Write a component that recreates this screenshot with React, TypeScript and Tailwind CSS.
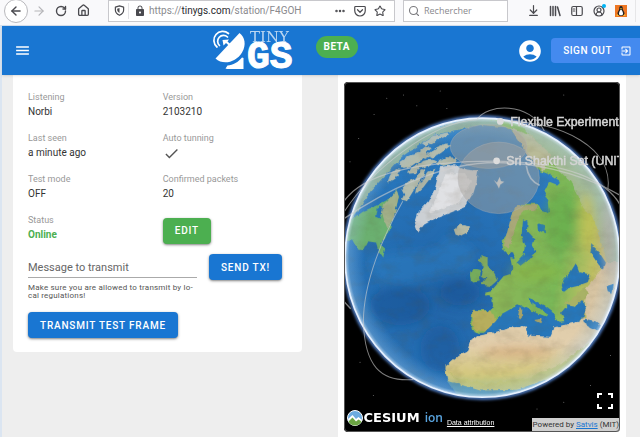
import type { ReactNode } from 'react'
import {
  MdAccountCircle,
  MdCheck,
  MdExitToApp,
  MdLock,
  MdMenu,
} from 'react-icons/md'
import {
  ArrowDownToLine,
  ArrowLeft,
  ArrowRight,
  CircleUserRound,
  Ellipsis,
  House,
  RotateCw,
  Search,
  Star,
} from 'lucide-react'

function ToolButton({ label, children }: { label: string; children: ReactNode }) {
  return (
    <button aria-label={label} className="relative flex size-[22px] items-center justify-center text-[#4a4a4f]">
      {children}
    </button>
  )
}

function ShieldIcon() {
  return (
    <svg viewBox="0 0 24 24" className="mx-px size-[11px]" fill="none" stroke="currentColor" strokeWidth="2.6" strokeLinejoin="round">
      <path d="M12 2 21 4.500V11c0 5-3.500 9-9 11.500C6.500 20 3 16 3 11V4.500z" />
      <path d="M12 6.500v11c-3-1.500-5-4-5-7V8z" fill="currentColor" stroke="none" />
    </svg>
  )
}

function PocketIcon() {
  return (
    <svg viewBox="0 0 24 24" className="size-3" fill="none" stroke="currentColor" strokeWidth="2.4" strokeLinecap="round" strokeLinejoin="round">
      <path d="M3 3h18a1.500 1.500 0 0 1 1.500 1.500v7a10.500 10.500 0 0 1-21 0v-7A1.500 1.500 0 0 1 3 3z" />
      <path d="m7 9.500 5 5 5-5" />
    </svg>
  )
}

function LibraryIcon() {
  return (
    <svg viewBox="0 0 24 24" className="size-3" fill="none" stroke="currentColor" strokeWidth="3" strokeLinecap="round">
      <path d="M3 3v18M8 3v18M13 3v18M17 4l5 17" />
    </svg>
  )
}

function SidebarIcon() {
  return (
    <svg viewBox="0 0 24 24" className="size-3" fill="none" stroke="currentColor" strokeWidth="2.4" strokeLinecap="round">
      <rect x="1.500" y="3" width="21" height="18" rx="3" />
      <path d="M11 3v18M4.500 8h3M4.500 12h3" />
    </svg>
  )
}

function PenguinIcon() {
  return (
    <svg viewBox="0 0 24 24" className="size-3">
      <rect width="24" height="24" fill="#ee7623" />
      <path d="M12 2c-3 0-3.600 2.500-3.500 6-.2 3-3.500 5-3.500 9 0 3 3 5 7 5s7-2 7-5c0-4-3.300-6-3.500-9 .1-3.500-.5-6-3.500-6z" fill="#222" />
      <path d="M12 9c-2 2-4 5-4 8s2 3.500 4 3.500 4-.5 4-3.500-2-6-4-8z" fill="#fff" />
      <path d="m10 7 2-1 2 1-2 2z" fill="#fbc02d" />
      <path d="M4 18l4 4H3zM20 18l-4 4h5z" fill="#fbc02d" />
    </svg>
  )
}

function BrowserBar() {
  return (
    <div className="flex h-[26px] items-center border-b border-[#d5e0ee] bg-[#f9f9fb] pb-1 pl-1">
      <div className="flex items-center">
        <button aria-label="Back" className="flex size-6 items-center justify-center rounded-full border border-[#b8b8bc] bg-white text-[#4a4a4f]">
          <ArrowLeft size={14} strokeWidth={2.4} />
        </button>
        <div className="flex">
          <ToolButton label="Forward">
            <ArrowRight size={14} strokeWidth={2} className="text-[#b5b5b8]" />
          </ToolButton>
          <ToolButton label="Reload">
            <RotateCw size={12} strokeWidth={2.8} />
          </ToolButton>
          <ToolButton label="Home">
            <House size={13} strokeWidth={2.4} />
          </ToolButton>
        </div>
      </div>

      <div className="ml-[14px] flex h-[22px] flex-1 items-center border border-[#c8c8cc] bg-white px-1 text-[#4a4a4f]">
        <ShieldIcon />
        <span className="mx-[2px] h-4 w-px bg-[#e3e3e6]" />
        <MdLock size={12} className="mx-[3px]" />
        <div
          role="textbox"
          aria-label="Address"
          tabIndex={0}
          className="flex-1 truncate font-[Roboto,'Open_Sans',sans-serif] text-[10px] text-[#8a8a8e]"
        >
          https://<span className="text-[#2a2a2e]">tinygs.com</span>/station/F4GOH
        </div>
        <button aria-label="Page actions" className="px-1">
          <Ellipsis size={12} strokeWidth={3} />
        </button>
        <button aria-label="Save to Pocket" className="px-1">
          <PocketIcon />
        </button>
        <button aria-label="Bookmark this page" className="px-1">
          <Star size={12} strokeWidth={2.2} />
        </button>
      </div>

      <label className="ml-2 flex h-[22px] w-[105px] items-center gap-1 border border-[#c8c8cc] bg-white px-1 text-[#7a7a7e]">
        <Search size={12} strokeWidth={2.2} className="shrink-0" />
        <input
          type="text"
          aria-label="Rechercher"
          placeholder="Rechercher"
          className="w-full min-w-0 font-['Open_Sans','Noto_Sans',sans-serif] text-[9px] outline-none placeholder:text-[#8a8a8e]"
        />
      </label>

      <div className="ml-[14px] flex border-r border-[#e6e6e8] pr-[3px]">
        <ToolButton label="Downloads">
          <ArrowDownToLine size={13} strokeWidth={2.2} />
        </ToolButton>
        <ToolButton label="Library">
          <LibraryIcon />
        </ToolButton>
        <ToolButton label="Sidebars">
          <SidebarIcon />
        </ToolButton>
        <ToolButton label="Account">
          <CircleUserRound size={12} strokeWidth={2.4} />
          <span className="absolute top-1 right-1 size-1 rounded-full bg-[#00b3f4]" />
        </ToolButton>
        <ToolButton label="Extension">
          <PenguinIcon />
        </ToolButton>
      </div>
      <div className="w-1" />
    </div>
  )
}

function Logo() {
  return (
    <svg viewBox="0 0 82 42" className="h-[42px] w-[82px] overflow-visible" fill="#fff" role="img" aria-label="Tiny GS">
      {/* dish, foot and feed */}
      <path d="M25.500 3C31 7 32.500 15 28 22.500 22 32.500 9 35.500 1.500 28.500z" />
      <path d="M11.500 38.500 13.500 35.500C19 35 24.500 32 28 27.500L29.500 28V39H13z" />
      <path d="M8.500 10 15 9.500 13.500 11.500 18 15.500 16.500 17 12 13 9.500 15.500z" />
      <g fill="none" stroke="#fff" strokeWidth="1.700" strokeLinecap="round">
        <path d="M5.500 15.500a5.500 5.500 0 0 1 8-8.500" />
        <path d="M3 17A8.500 8.500 0 0 1 14.500 3.500" />
      </g>
      <text x="36" y="12" fontFamily="'DejaVu Serif', serif" fontSize="15" opacity=".7">
        TINY
      </text>
      <text x="33" y="38" fontFamily="'Liberation Mono', monospace" fontSize="38" fontWeight="700" stroke="#fff" strokeWidth="1">
        GS
      </text>
    </svg>
  )
}

function AppHeader() {
  return (
    <header className="relative z-10 grid h-[49px] grid-cols-[3fr_auto_4fr] items-center bg-[#1976d2] text-white shadow">
      <button aria-label="Menu" className="ml-3 justify-self-start">
        <MdMenu size={17} />
      </button>
      <div className="flex items-center gap-5">
        <Logo />
        <span className="mb-2 rounded-full bg-[#4caf50] px-2 py-1 text-[10px] leading-[14px] font-bold tracking-wider">
          BETA
        </span>
      </div>
      <div className="flex items-center justify-end gap-2">
        <button aria-label="Account">
          <MdAccountCircle size={26} />
        </button>
        <button className="flex h-[25px] items-center gap-2 rounded-l bg-[#448aef] pr-2 pl-3 text-[10px] font-medium tracking-wider">
          SIGN OUT
          <MdExitToApp size={12} />
        </button>
      </div>
    </header>
  )
}

function Field({ label, children }: { label: string; children: ReactNode }) {
  return (
    <div className="h-[41px]">
      <dt className="text-[9px] leading-[14px] text-[#999]">{label}</dt>
      <dd className="text-[10px] leading-4 text-[#333]">{children}</dd>
    </div>
  )
}

const raised = 'h-[26px] shrink-0 rounded px-3 text-[10px] font-medium tracking-[0.08em] text-white shadow-sm shadow-black/40'

function StationCard() {
  return (
    <section className="self-start rounded-b bg-white pt-[15px] pr-1 pb-[14px] pl-[15px]">
      <dl className="grid grid-cols-2">
        <Field label="Listening">Norbi</Field>
        <Field label="Version">2103210</Field>
        <Field label="Last seen">a minute ago</Field>
        <Field label="Auto tunning">
          <MdCheck size={17} className="text-[#555]" aria-label="yes" />
        </Field>
        <Field label="Test mode">OFF</Field>
        <Field label="Confirmed packets">20</Field>
        <Field label="Status">
          <span className="font-bold text-[#4caf50]">Online</span>
        </Field>
        <div className="pt-1">
          <button className={`${raised} bg-[#4caf50]`}>EDIT</button>
        </div>
      </dl>

      <form className="flex gap-3">
        <div className="w-[169px]">
          <input
            type="text"
            aria-label="Message to transmit"
            placeholder="Message to transmit"
            className="block h-6 w-full border-b border-[#aaa] pt-1 text-[11px] outline-none placeholder:text-[#666]"
          />
          <p className="pt-[6px] text-[8px] leading-2 tracking-wide text-[#555]">
            Make sure you are allowed to transmit by lo&shy;cal regulations!
          </p>
        </div>
        <button type="button" className={`${raised} bg-[#1976d2]`}>
          SEND TX!
        </button>
      </form>
      <button className={`${raised} mt-3 bg-[#1976d2]`}>TRANSMIT TEST FRAME</button>
    </section>
  )
}

const arcticIslands = [
  'M205 262l28-18 30-12 22-18 20 4-18 18 10 8-32 14-20 14-30 8z',
  'M240 280l36-22 26-6 18 8-22 12-30 8-14 14-20 2z',
  'M214 342l18-22 22-10 14-22 20-8-4 20-18 22-12 18-24 38-16-4 8-16z',
  'M290 238l30-22 30-12 10 8-26 20-24 16z',
  'M316 262l30-16 34 2-8 16-32 8z',
  'M262 330l20-18 12-22 22-10-12 24-24 32-22 20z',
  'M272 206l40-24 40-10 4 8-36 16-30 16z',
  'M180 300l18-18 14 2-14 22-28 20z',
]

const stars = [
  [132, 118], [86, 190], [170, 70], [260, 92], [330, 48], [700, 60], [780, 130], [90, 860],
  [840, 840], [780, 930], [700, 980], [220, 60], [60, 260], [130, 960], [620, 1000], [350, 100],
]

// Units are thirds of a pixel at the map's usual size.
function Globe() {
  return (
    <svg viewBox="42 21 828 1047" className="block w-full bg-black" role="img" aria-label="Satellite map">
      <defs>
        <radialGradient id="ocean" cx=".35" cy=".62" r=".7">
          <stop offset="0" stopColor="#2163a6" />
          <stop offset=".5" stopColor="#2672b8" />
          <stop offset="1" stopColor="#2f84c8" />
        </radialGradient>
        <radialGradient id="air">
          <stop offset=".86" stopColor="#9cc4e4" stopOpacity="0" />
          <stop offset=".97" stopColor="#a9cdea" stopOpacity=".3" />
          <stop offset="1" stopColor="#eaf5ff" stopOpacity=".8" />
        </radialGradient>
        <linearGradient id="europe" gradientUnits="userSpaceOnUse" x1="540" y1="500" x2="880" y2="560">
          <stop offset="0" stopColor="#8ab758" />
          <stop offset=".45" stopColor="#7ab858" />
          <stop offset=".75" stopColor="#c0c065" />
          <stop offset="1" stopColor="#c8bda2" />
        </linearGradient>
        <linearGradient id="africa" x1="0" y1="0" x2="0" y2="1">
          <stop offset="0" stopColor="#d5c2a0" />
          <stop offset=".6" stopColor="#e3d0ae" />
          <stop offset=".8" stopColor="#d4c880" />
          <stop offset="1" stopColor="#98bd76" />
        </linearGradient>
        <filter id="soft" x="-40%" y="-40%" width="180%" height="180%">
          <feGaussianBlur stdDeviation="14" />
        </filter>
        <filter id="glow">
          <feGaussianBlur stdDeviation="4" />
        </filter>
        <filter id="coast" colorInterpolationFilters="sRGB">
          <feTurbulence type="fractalNoise" baseFrequency=".06" numOctaves="2" seed="4" />
          <feDisplacementMap in="SourceGraphic" scale="13" xChannelSelector="R" yChannelSelector="G" />
        </filter>
        <filter id="relief" x="0" y="0" width="100%" height="100%" colorInterpolationFilters="sRGB">
          <feTurbulence type="fractalNoise" baseFrequency=".02 .03" numOctaves="4" seed="8" />
          <feColorMatrix values="0 0 0 0 .35  0 0 0 0 .3  0 0 0 0 .2  2.500 0 0 0 -1.100" />
        </filter>
        <clipPath id="disc">
          <ellipse cx="456" cy="547" rx="411" ry="418" />
        </clipPath>
      </defs>

      <g fill="#777">
        {stars.map(([x, y]) => (
          <circle key={`${x}-${y}`} cx={x} cy={y} r="1.5" />
        ))}
      </g>

      <ellipse cx="456" cy="547" rx="414" ry="421" fill="none" stroke="#5b8fe0" strokeWidth="9" filter="url(#glow)" />
      <g clipPath="url(#disc)">
        <rect x="42" y="120" width="828" height="850" fill="url(#ocean)" />

        <g filter="url(#soft)">
          <ellipse cx="210" cy="690" rx="90" ry="60" fill="#124f91" opacity=".5" />
          <ellipse cx="390" cy="650" rx="60" ry="40" fill="#164f92" opacity=".5" />
          <ellipse cx="330" cy="820" rx="60" ry="70" fill="#144f90" opacity=".4" />
          <path d="M110 560C200 500 330 560 350 480 420 500 480 540 400 590 300 600 260 640 150 620z" fill="#2f84c8" opacity=".4" />
        </g>

        <g filter="url(#coast)">
          {/* North America and the arctic rim */}
          <path d="M30 500 60 400 130 290 200 215 300 160 430 128 540 128 560 160 450 150 380 165 320 178 270 205 215 245 175 290 120 350 100 385 60 440z" fill="#8fb095" />
          <path d="M40 450 95 410 140 390 175 372 200 345 206 365 195 410 184 445 178 470 165 485 150 505 165 520 160 550 146 530 138 502 112 498 100 522 80 518 66 492 40 495z" fill="#6bb070" />
          <path d="M150 400 200 345 206 365 190 430 172 460z" fill="#a3b18b" />
          {arcticIslands.map((d) => (
            <path key={d} d={d} fill="#b3bcae" />
          ))}

          {/* Greenland, Iceland, Svalbard */}
          <path d="M330 276 368 270 400 282 444 288 438 326 430 352 402 396 356 414 316 430 282 448 264 472 254 446 266 408 296 376 314 340z" fill="#ccd0d4" />
          <path d="M346 296 404 294 422 320 386 382 320 406 296 412 326 350z" fill="#e0e1e4" />
          <path d="M370 460 390 448 416 453 412 474 392 484 376 478z" fill="#b8bca6" />

          {/* Eurasia */}
          <path d="M470 128 540 165 575 185 592 220 602 250 622 285 662 300 692 320 680 332 656 322 642 350 652 380 656 412 632 404 624 386 570 386 546 410 544 440 530 480 514 500 520 526 534 540 548 530 556 552 540 548 546 578 540 596 520 602 500 626 482 648 464 652 470 662 486 666 488 690 484 705 425 703 420 735 425 766 448 772 470 772 497 738 560 690 690 740 770 730 800 800 900 780 900 128z" fill="url(#europe)" />
          <path d="M470 128 570 150 620 200 660 260 720 320 760 400 790 430 830 560 900 600 900 128z" fill="#a3ba92" />
          <path d="M540 160 600 180 660 240 640 290 600 250z" fill="#b9bb98" />
          <path d="M546 410 566 390 622 388 618 402 575 410 560 440 548 480 536 520 520 512z" fill="#a9a878" />
          <path d="M422 706 484 706 497 738 470 768 430 764z" fill="#b7ae5d" />

          {/* Africa and Arabia */}
          <path d="M448 780 500 768 545 754 586 752 592 780 660 784 668 756 730 742 765 728 764 640 830 560 900 560 880 800 760 900 640 950 500 975 400 955 350 912 345 874 386 838 411 826 421 794z" fill="url(#africa)" />
          <path d="M700 686 764 636 772 652 762 678 730 694z" fill="#a9b266" />
          <path d="M350 885 380 908 470 925 600 905 700 860 800 780 830 780 720 900 560 960 420 950z" fill="#c3c473" />
          <path d="M350 915 450 945 560 943 680 900 740 870 640 970 480 990 380 960z" fill="#4c93b2" />

          {/* British Isles */}
          <path d="M453 540 472 546 472 570 492 596 502 614 482 632 452 628 468 610 454 600 460 576 446 556z" fill="#83ac5f" />
          <path d="M430 578 452 584 448 616 422 620 420 600z" fill="#75ab5c" />

          {/* seas */}
          <g fill="#2777ba">
            <path d="M455 778 497 737 515 715 550 696 576 690 606 706 628 722 620 742 640 738 650 716 632 702 602 682 590 666 606 672 640 690 666 710 682 740 702 738 692 712 710 690 736 694 760 672 766 700 758 728 730 740 668 756 660 782 620 778 592 778 586 752 545 756z" />
            <path d="M700 612 720 590 736 564 746 590 780 598 772 620 740 632 715 638 700 650 694 630z" />
            <path d="M782 506 804 528 826 562 820 586 800 562 780 532z" />
            <path d="M764 730 790 736 812 754 806 766 780 756 758 740z" />
            <path d="M828 632 850 625 846 652 832 648z" />
            <path d="M578 432 592 440 590 466 612 490 606 510 616 530 598 552 572 572 558 560 580 536 584 508 574 480z" />
            <path d="M624 444 642 450 644 474 626 466z" />
            <path d="M144 394 158 400 152 430 138 424z" />
          </g>
          <path d="M568 694 576 702 574 732 562 728zM608 734 634 730 630 744z" fill="#a5a36b" />
        </g>

        {/* Svalbard */}
        <path d="M490 314 500 322 508 305 512 318 522 320 510 328 506 340 500 328z" fill="#d4dadf" />

        {/* terrain tints */}
        <g filter="url(#soft)">
          <ellipse cx="690" cy="440" rx="50" ry="90" fill="#5aa948" opacity=".45" />
          <ellipse cx="620" cy="590" rx="80" ry="30" fill="#8cb83f" opacity=".5" />
          <ellipse cx="770" cy="440" rx="22" ry="90" fill="#d5c64e" opacity=".5" />
          <ellipse cx="838" cy="480" rx="24" ry="120" fill="#b8a89a" opacity=".7" />
          <ellipse cx="560" cy="830" rx="110" ry="18" fill="#cf9d6c" opacity=".5" />
        </g>
        <rect x="42" y="120" width="828" height="850" filter="url(#relief)" opacity=".12" />
        <ellipse cx="456" cy="547" rx="411" ry="418" fill="url(#air)" />
      </g>
      <ellipse cx="456" cy="547" rx="411" ry="418" fill="none" stroke="#e6f1ff" strokeWidth="5" />

      {/* coverage areas */}
      <g fill="#a8a49c" fillOpacity=".48" stroke="#b5b5b8" strokeOpacity=".5" strokeWidth="2">
        <ellipse cx="475" cy="214" rx="115" ry="66" />
        <ellipse cx="505" cy="308" rx="122" ry="107" />
      </g>

      {/* orbits */}
      <g fill="none" stroke="#d0d0d0" strokeWidth="4" opacity=".6">
        <path d="M42 378C90 310 220 258 500 258 700 262 830 310 872 395" />
        <path d="M42 430C160 350 330 262 500 262 660 262 800 320 872 362" />
        <path d="M42 410C120 290 300 140 440 134 470 85 600 80 642 168" strokeWidth="3" />
        <path d="M510 138C700 138 850 220 832 345" strokeWidth="3" />
        <path d="M218 378C160 480 100 620 100 740 104 870 150 920 250 912" strokeWidth="3" />
        <path d="M42 678 62 700" />
        <path d="M588 272C592 300 604 320 628 330" strokeWidth="5" />
      </g>

      <g fill="#dcdcdc">
        <circle cx="510" cy="139" r="10" />
        <circle cx="499" cy="257" r="10" />
      </g>
      <g fontFamily="'Liberation Sans', Arial, sans-serif" fontSize="37" fill="#d4d4d4" stroke="#d4d4d4" strokeWidth="1.5">
        <text x="540" y="152">Flexible Experiment</text>
        <text x="528" y="270">Sri Shakthi Sat (UNIT</text>
      </g>
    </svg>
  )
}

function CesiumMark() {
  return (
    <svg viewBox="0 0 32 32" className="size-4">
      <circle cx="16" cy="16" r="15" fill="#6cabdf" stroke="#fff" strokeWidth="2" />
      <path d="M2 18 11 10 18 18 23 14 30 20A14.500 14.500 0 0 1 3 22z" fill="#fff" />
      <path d="M3 23 11 15 18 23 23 19 29 23A14.500 14.500 0 0 1 3 23z" fill="#6ba543" />
    </svg>
  )
}

function MapCard() {
  return (
    <section className="bg-white px-[6px] py-[7px]">
      <div className="relative overflow-hidden rounded-sm">
        <Globe />
        <button aria-label="Fullscreen" className="absolute right-[6px] bottom-[22px] text-white">
          <svg viewBox="0 0 18 18" className="size-[18px]" fill="none" stroke="currentColor" strokeWidth="2">
            <path d="M2 6V2h4M12 2h4v4M16 12v4h-4M6 16H2v-4" />
          </svg>
        </button>
        <div className="absolute bottom-1 left-[3px] flex items-end gap-1 text-white">
          <a href="#cesium" className="flex items-center gap-px font-['DejaVu_Sans',sans-serif] text-[13px] leading-5 font-bold">
            <CesiumMark />
            <span>CESIUM</span>
            <span className="ml-1 font-['Open_Sans',sans-serif] text-[12px] font-semibold text-[#5aa5e0]">ion</span>
          </a>
          <a href="#attribution" className="font-['Liberation_Sans',sans-serif] text-[7px] leading-[10px] underline">
            Data attribution
          </a>
        </div>
        <p className="absolute right-0 bottom-0 bg-[#cfcfcf] px-px text-[8px] leading-[14px] text-[#333]">
          Powered by{' '}
          <a href="#satvis" className="text-[#1976d2] underline">
            Satvis
          </a>{' '}
          (MIT)
        </p>
        <div className="pointer-events-none absolute inset-0 rounded-sm border border-[#555]" />
      </div>
    </section>
  )
}

function App() {
  return (
    <div className="flex min-h-screen flex-col overflow-hidden bg-[#eee] font-[Roboto,sans-serif]">
      <BrowserBar />
      <div className="flex flex-1 flex-col border-l-2 border-[#dbe5f1]">
        <AppHeader />
        <main className="grid flex-1 grid-cols-2 gap-9 pr-[14px] pl-[11px]">
          <StationCard />
          <MapCard />
        </main>
      </div>
    </div>
  )
}

export default App
